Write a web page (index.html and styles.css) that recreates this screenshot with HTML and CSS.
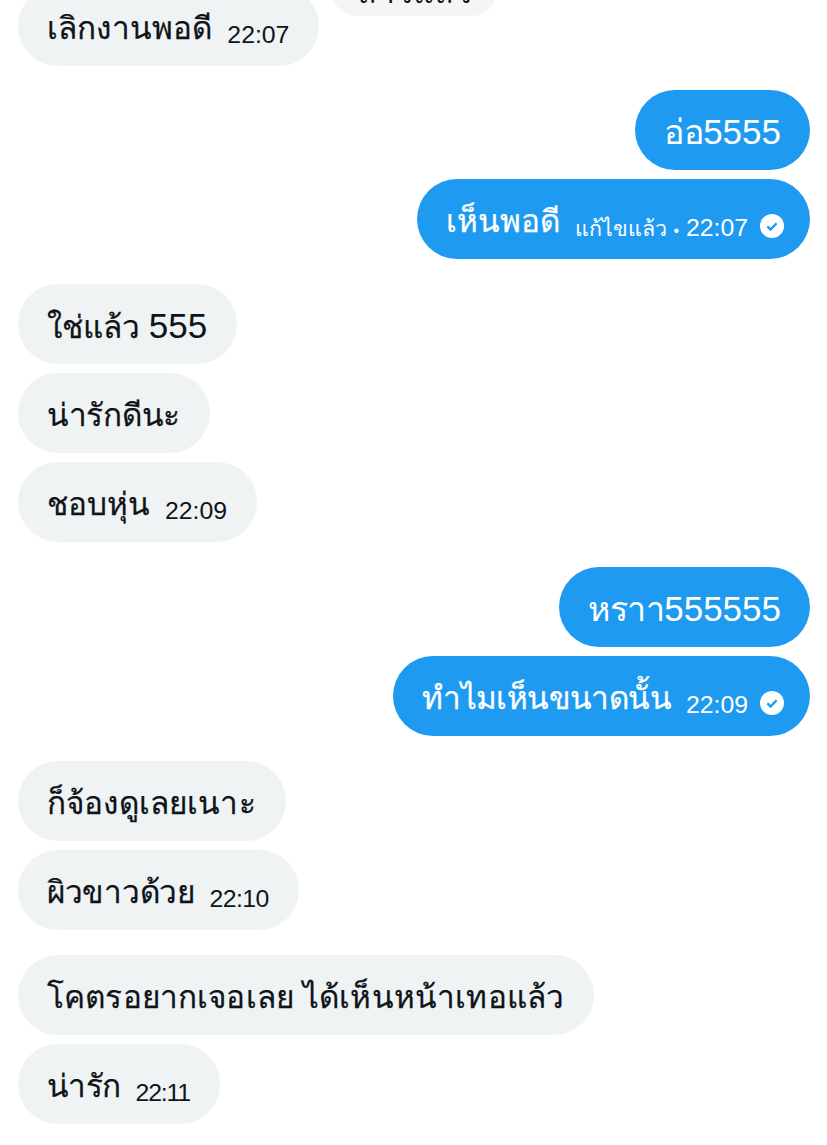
FILE: index.html
```html
<!DOCTYPE html>
<html lang="th">
<head>
<meta charset="utf-8">
<title>Messages</title>
<link rel="stylesheet" href="styles.css">
</head>
<body>
<main class="chat">
  <div class="clipped"><span class="clipped-text">ล่าวแล้ว</span></div>
  <section class="group in first">
    <div class="bubble"><span class="text open">เลิกงานพอดี</span><span class="meta">22:07</span></div>
  </section>
  <section class="group out">
    <div class="bubble"><span class="text wide">อ่อ<span class="num">5555</span></span></div>
    <div class="bubble tick"><span class="text">เห็นพอดี</span><span class="meta"><span class="meta-thai">แก้ไขแล้ว</span> <span class="dot">•</span> 22:07</span>
      <svg class="seen" viewBox="0 0 24 24"><circle cx="12" cy="12" r="12" fill="#fff"/><path d="M7.4 12.4l3.2 3.2 6-6.4" fill="none" stroke="#1d9bf0" stroke-width="2.4"/></svg></div>
  </section>
  <section class="group in">
    <div class="bubble"><span class="text">ใช่แล้ว <span class="num">555</span></span></div>
    <div class="bubble"><span class="text snug">น่ารักดีนะ</span></div>
    <div class="bubble"><span class="text">ชอบหุ่น</span><span class="meta">22:09</span></div>
  </section>
  <section class="group out">
    <div class="bubble"><span class="text wide">หราา<span class="num">555555</span></span></div>
    <div class="bubble tick"><span class="text tight">ทำไมเห็นขนาดนั้น</span><span class="meta">22:09</span>
      <svg class="seen" viewBox="0 0 24 24"><circle cx="12" cy="12" r="12" fill="#fff"/><path d="M7.4 12.4l3.2 3.2 6-6.4" fill="none" stroke="#1d9bf0" stroke-width="2.4"/></svg></div>
  </section>
  <section class="group in">
    <div class="bubble"><span class="text open">ก็จ้องดูเลยเนาะ</span></div>
    <div class="bubble"><span class="text snug">ผิวขาวด้วย</span><span class="meta meta-ten">22:10</span></div>
  </section>
  <section class="group in">
    <div class="bubble"><span class="text open">โคตรอยากเจอเลย ได้เห็นหน้าเทอแล้ว</span></div>
    <div class="bubble"><span class="text tight">น่ารัก</span><span class="meta meta-eleven">22:11</span></div>
  </section>
</main>
</body>
</html>
```
FILE: styles.css
```css
* { box-sizing: border-box; }
html, body { margin: 0; height: 100%; background: #fff; overflow: hidden; }
.chat {
  position: relative;
  height: 1145px;
  overflow: hidden;
  padding: 0 17px 0 18px;
  font-family: "Liberation Sans", sans-serif;
  display: flex;
  flex-direction: column;
  gap: 24.6px;
}
.group { display: flex; flex-direction: column; gap: 8.6px; }
.group.in { align-items: flex-start; }
.group.out { align-items: flex-end; }
.first { margin: -14.4px 0 -0.6px; }
.bubble {
  height: 80.4px;
  border-radius: 40.2px;
  padding: 4px 29px 0;
  display: flex;
  align-items: center;
  white-space: nowrap;
}
.tick { padding-right: 26px; }
.in .bubble { background: #eff3f4; color: #0f1419; padding-right: 30px; }
.out .bubble { background: #1f9af1; color: #fff; }
.text { font-size: 31.5px; line-height: 44px; -webkit-text-stroke: 0.25px currentColor; }
.open { letter-spacing: 0.15px; }
.snug { letter-spacing: -0.3px; }
.tight { letter-spacing: -0.6px; }
.wide { font-size: 34px; letter-spacing: -0.5px; -webkit-text-stroke: 0; }
.num { font-size: 35px; letter-spacing: 0; -webkit-text-stroke: 0; }
.meta { font-size: 24.8px; margin-left: 15px; margin-top: 14px; }
.meta-ten { letter-spacing: -0.6px; }
.meta-eleven { letter-spacing: -1.2px; }
.meta-thai { font-size: 21.5px; }
.dot { font-size: 16px; }
.seen { width: 24px; height: 24px; margin-left: 12px; margin-top: 10px; flex: none; }
.clipped {
  position: absolute;
  left: 332px;
  top: -34px;
  width: 165px;
  height: 50px;
  border-radius: 25px;
  background: #f5f5f5;
  color: #0f1419;
  text-align: center;
}
.clipped-text { font-size: 32px; line-height: 52px; }
```
